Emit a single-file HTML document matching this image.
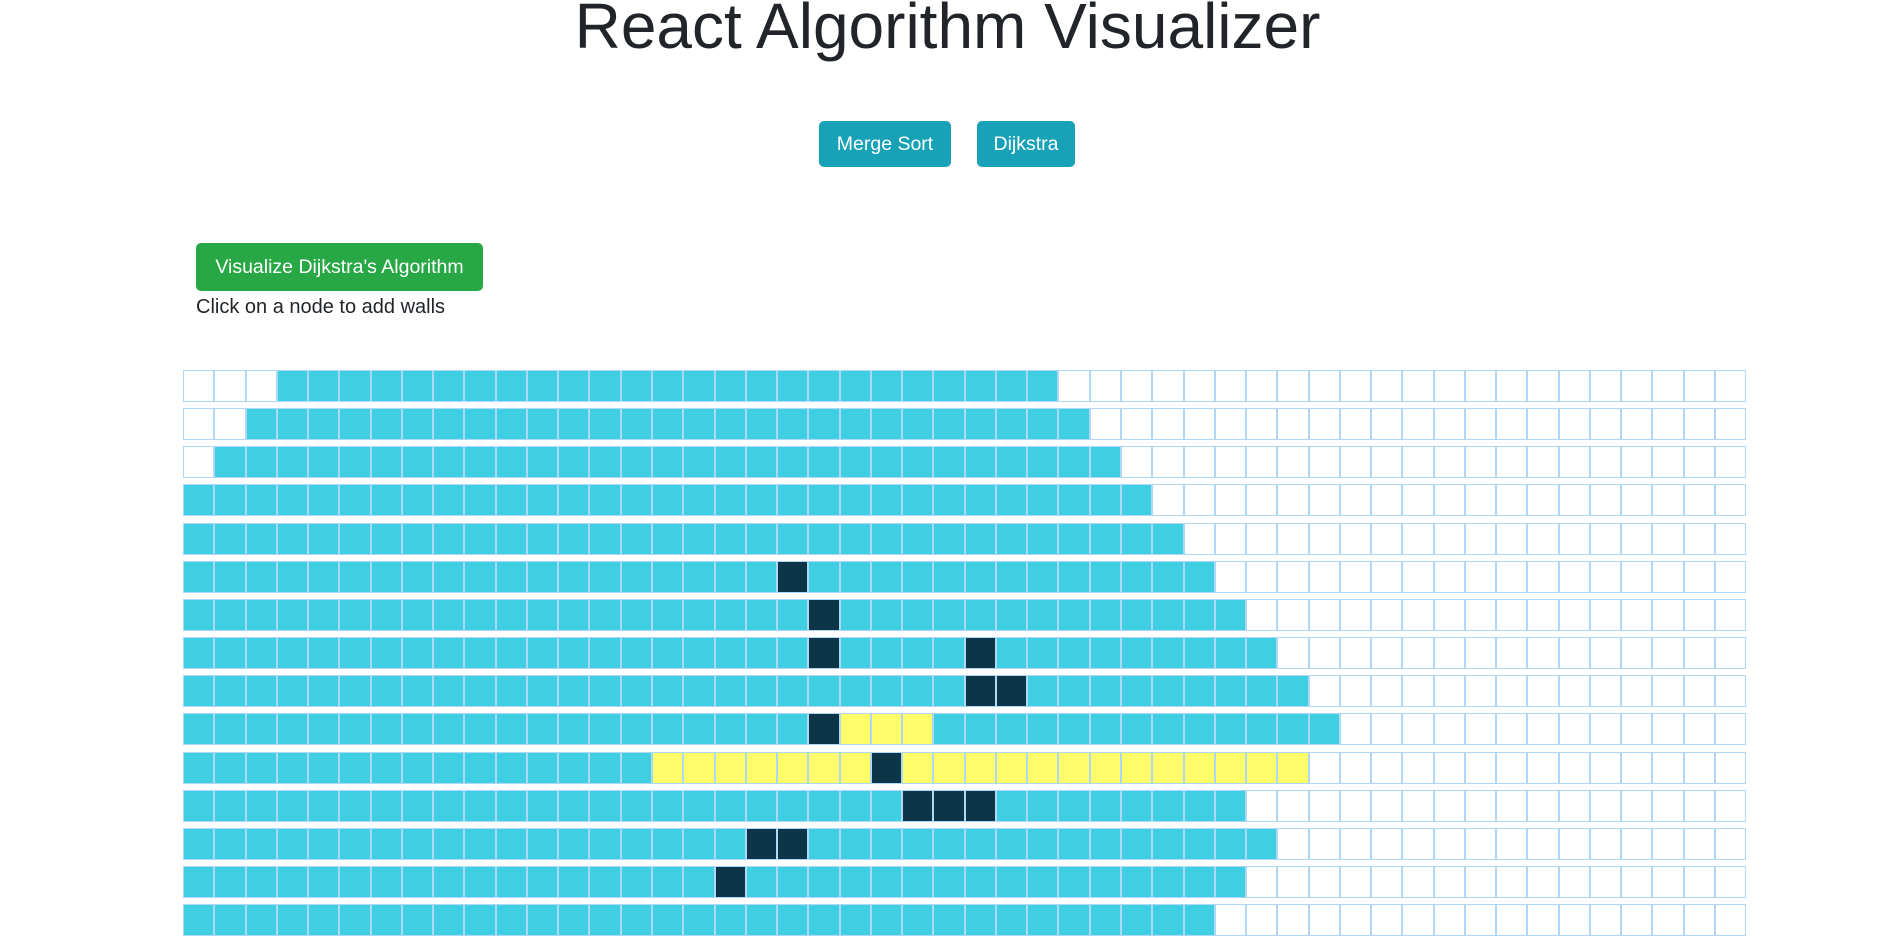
<!DOCTYPE html>
<html><head><meta charset="utf-8"><style>
body{margin:0;width:1895px;height:932px;overflow:hidden;background:#fff;font-family:"Liberation Sans",sans-serif;color:#212529;position:relative}
h1{position:absolute;left:0;width:1895px;top:-9px;margin:0;text-align:center;font-weight:400;font-size:64px;letter-spacing:0px;line-height:70px}
.btn{position:absolute;border-radius:5px;color:#fff;font-size:19.5px;display:flex;align-items:center;justify-content:center}
.info{background:#17a2b8}
.grn{background:#28a745}
.txt{position:absolute;left:196px;top:296px;font-size:20px}
.row{position:absolute;left:183px;display:flex}
.c{width:31.27px;height:32px;box-sizing:border-box;border:1.25px solid rgb(175,216,248);background:#fff}
.v{background:#40cee3}.w{background:#0c3547}.y{background:#fffe6a}
</style></head><body>
<h1>React Algorithm Visualizer</h1>
<div class="btn info" style="left:819px;top:121px;width:132px;height:46px">Merge Sort</div>
<div class="btn info" style="left:977px;top:121px;width:98px;height:46px">Dijkstra</div>
<div class="btn grn" style="left:196px;top:243px;width:287px;height:48px">Visualize Dijkstra's Algorithm</div>
<div class="txt">Click on a node to add walls</div>
<div id="g"></div>
<script>
var rows=[[3,27],[2,28],[1,29],[0,30],[0,31],[0,32],[0,33],[0,34],[0,35],[0,36],[0,35],[0,33],[0,34],[0,33],[0,32]];
var walls={5:[19],6:[20],7:[20,25],8:[25,26],9:[20],10:[22],11:[23,24,25],12:[18,19],13:[17]};
var yel={9:[21,22,23],10:[15,16,17,18,19,20,21,23,24,25,26,27,28,29,30,31,32,33,34,35]};
var h='';
for(var r=0;r<15;r++){h+='<div class="row" style="top:'+(370+r*38.15)+'px">';
for(var c=0;c<50;c++){var k='c';
if(c>=rows[r][0]&&c<=rows[r][1])k+=' v';
if(yel[r]&&yel[r].indexOf(c)>=0)k='c y';
if(walls[r]&&walls[r].indexOf(c)>=0)k='c w';
h+='<div class="'+k+'"></div>';}
h+='</div>';}
document.getElementById('g').innerHTML=h;
</script>
</body></html>
